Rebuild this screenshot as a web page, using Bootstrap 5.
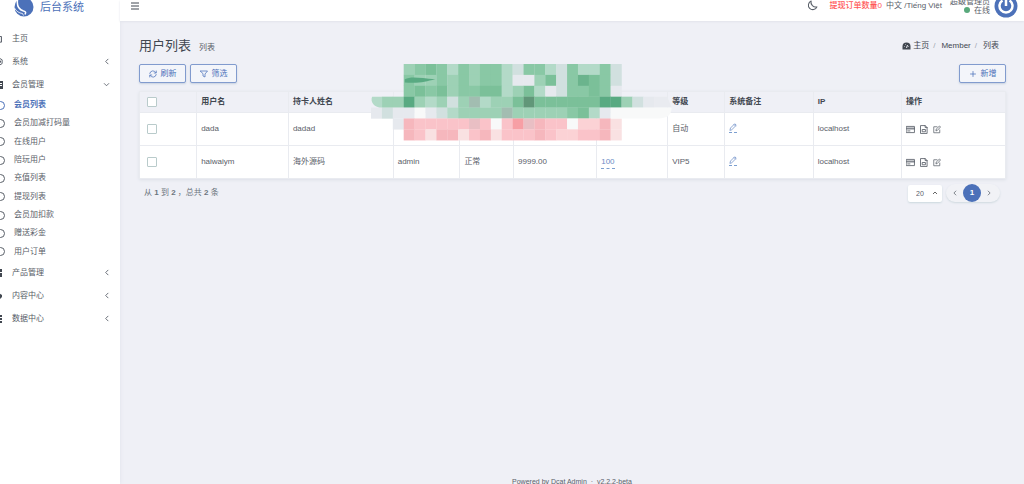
<!DOCTYPE html>
<html lang="zh-CN">
<head>
<meta charset="utf-8">
<meta name="viewport" content="width=device-width, initial-scale=1">
<title>用户列表 - 后台系统</title>
<link href="https://cdn.jsdelivr.net/npm/bootstrap@5.3.0/dist/css/bootstrap.min.css" rel="stylesheet">
<style>
  :root { --brand: #4c71b9; --ink: #5a6069; --page: #eff0f6; --line: #e9ebf0; }
  body { font: 8px/12px "Liberation Sans", "Noto Sans CJK SC", sans-serif; color: var(--ink); background: var(--page); overflow: hidden; }
  a { color: inherit; text-decoration: none; }
  svg { flex: none; display: block; }
  .ico { fill: none; stroke: currentColor; stroke-width: 1.5; stroke-linecap: round; stroke-linejoin: round; }
  .arrow { fill: none; stroke: currentColor; stroke-width: 1; }
  .side { width: 120px; background: #fff; flex: none; box-shadow: 0 0 4px #dfe2ea; }
  .brand-link { height: 13px; margin-bottom: 14px; padding-left: 14px; gap: 6px; font-size: 11px; color: var(--brand); white-space: nowrap; }
  .side-link { height: 23px; gap: 8px; padding-right: 10px; color: #565c66; }
  .side-link > svg:first-child { margin-left: -6px; }
  .side-link .label-text { flex: 1; }
  .sub-menu { display: grid; grid-auto-rows: 1fr; height: 165px; }
  .sub-menu a { gap: 9px; }
  .sub-menu a.active { color: var(--brand); font-weight: 700; }
  .ring { width: 9px; height: 9px; margin-left: -4px; border: 1px solid currentColor; border-radius: 50%; }
  .topbar { height: 21px; padding: 0 6px 10px 10px; background: #fff; box-shadow: 0 1px 2px #e2e4eb; white-space: nowrap; }
  .user-info { line-height: 9px; }
  .dot { width: 6px; height: 6px; border-radius: 50%; background: #59a97c; }
  .alert-text { color: #ff5656; font-weight: 500; margin: 0 4px 0 12px; }
  .main-area { padding: 16px 18px 0 19px; }
  .page-title { font-size: 13px; line-height: 18px; color: #414750; margin: 0; font-weight: 400; }
  .sub-title { font-size: 8px; padding-top: 4px; }
  .crumbs { color: #414750; padding-right: 7px; }
  .crumbs .home { gap: 2px; }
  .crumbs .sep { color: #a0a6b0; margin: 0 6px 0 4px; }
  .tools { margin-top: 9px; }
  .tool-btn { --bs-btn-color: var(--brand); --bs-btn-border-color: #819bce; --bs-btn-hover-color: #fff; --bs-btn-hover-bg: var(--brand); --bs-btn-padding-x: 0; --bs-btn-padding-y: 0; --bs-btn-font-size: 8px; --bs-btn-border-radius: 2px; width: 47px; height: 19px; box-shadow: 0 1px 2px #c6d0df; background: #f3f5fa; }
  .grid-wrap { box-shadow: 0 1px 3px #dcdfe7; }
  .user-table { --bs-table-bg: #fff; table-layout: fixed; color: var(--ink); border-color: var(--line); margin: 0; }
  .user-table th { --bs-table-bg: var(--page); height: 21px; color: #414750; }
  .user-table th, .user-table td { padding: 0 4px; line-height: 12px; vertical-align: middle; white-space: nowrap; }
  .user-table td { height: 33px; }
  .user-table th:first-child, .user-table td:first-child { padding-left: 7px; }
  .user-table .form-check-input { display: block; width: 10px; height: 10px; margin: 0; border: 1px solid #b9cbcb; border-radius: 1px; }
  .editable { display: inline-block; color: #6b8cc6; border-bottom: 1px dashed #7c9fd0; }
  .row-tools { gap: 5px; }
  .mosaic { position: absolute; left: 26.8%; top: -27px; width: 305px; overflow: visible; }
  .grid-foot { margin-top: 5px; padding: 0 6px 0 5px; }
  .page-select { width: 34px; height: 17px; padding: 0 8px; font-size: 7px; line-height: 17px; color: var(--ink); border: 0; border-radius: 2px; background: #fff url("data:image/svg+xml,%3Csvg xmlns='http://www.w3.org/2000/svg' viewBox='0 0 6 4'%3E%3Cpath d='M1 3l2-2 2 2' fill='none' stroke='%23666'/%3E%3C/svg%3E") no-repeat right 4px center / 6px 4px; box-shadow: 0 1px 2px #cbd8dd; }
  .pager { height: 18px; width: 54px; border-radius: 9px; background: #f1f2f6; box-shadow: 0 1px 2px #cfd9df; }
  .pager .page-link { padding: 0; width: 18px; height: 18px; border: 0; border-radius: 50%; background: none; color: var(--ink); font-size: 8px; }
  .pager .active .page-link { background: var(--brand); color: #fff; font-weight: 700; }
  footer { font-size: 7px; line-height: 10px; margin-bottom: -3px; }
</style>
</head>
<body>
<svg class="d-none" aria-hidden="true">
  <symbol id="left" viewBox="0 0 6 8"><path d="M4.500 1L1.500 4l3 3"/></symbol>
  <symbol id="pencil" viewBox="0 0 16 16"><path d="M2 14l1-4 8.500-8.500 3 3L6 13zM10 3l3 3"/></symbol>
  <symbol id="card-i" viewBox="0 0 16 14"><path d="M1 1.500h14v11H1zM1 4.500h14M1 6h14M3 9.500h4"/></symbol>
  <symbol id="doc" viewBox="0 0 14 16"><path d="M1.500 1h7.500l3.500 3.500V15h-11zM9 1v3.500h3.500M4.500 8h5v4h-5z"/></symbol>
  <symbol id="edit" viewBox="0 0 16 16"><path d="M8 2.500H1.500v12h12V9M6 10l.5-3L13 1l2 2-6 6.500z"/></symbol>
</svg>
<div class="d-flex min-vh-100">
  <aside class="side">
    <a href="#" class="brand-link d-flex align-items-center">
      <svg width="20" height="20" viewBox="0 0 20 20"><circle cx="10" cy="10" r="9.500" fill="#4c71b9"/><path d="M3.500 3C2.500 10.500 6 13 9.500 14c2.500.6 2.500 1.500 1.500 3.500" fill="none" stroke="#fff" stroke-width="1.500"/><path d="M.5 11c2 3.500 4.500 5 8 5.500l1 2" fill="none" stroke="#fff" stroke-width=".8"/></svg>
      <span>后台系统</span>
    </a>
    <nav>
      <a href="#" class="side-link d-flex align-items-center"><svg width="10" height="10" viewBox="0 0 16 16" class="ico"><path d="M1 4h11v9H1zM5 4v9M9 4v9"/></svg><span class="label-text">主页</span></a>
      <a href="#" class="side-link d-flex align-items-center"><svg width="10" height="10" viewBox="0 0 16 16" class="ico"><path d="M8 1.500l5 3v6l-5 3-5-3v-6z"/><circle cx="8" cy="7.500" r="2.500"/></svg><span class="label-text">系统</span><svg width="6" height="7" class="arrow"><use href="#left"/></svg></a>
      <a href="#" class="side-link d-flex align-items-center"><svg width="10" height="10" viewBox="0 0 10 10"><path fill="#414750" d="M0 1h9v8H0z"/><path stroke="#fff" d="M5 3.500h3M5 5.500h3"/></svg><span class="label-text">会员管理</span><svg width="7" height="5" viewBox="0 0 8 6" class="arrow"><path d="M1 1.500l3 3 3-3"/></svg></a>
      <div class="sub-menu">
        <a href="#" class="active d-flex align-items-center"><i class="ring"></i>会员列表</a>
        <a href="#" class="d-flex align-items-center"><i class="ring"></i>会员加减打码量</a>
        <a href="#" class="d-flex align-items-center"><i class="ring"></i>在线用户</a>
        <a href="#" class="d-flex align-items-center"><i class="ring"></i>陪玩用户</a>
        <a href="#" class="d-flex align-items-center"><i class="ring"></i>充值列表</a>
        <a href="#" class="d-flex align-items-center"><i class="ring"></i>提现列表</a>
        <a href="#" class="d-flex align-items-center"><i class="ring"></i>会员加扣款</a>
        <a href="#" class="d-flex align-items-center"><i class="ring"></i>赠送彩金</a>
        <a href="#" class="d-flex align-items-center"><i class="ring"></i>用户订单</a>
      </div>
      <a href="#" class="side-link d-flex align-items-center"><svg width="10" height="10" viewBox="0 0 10 10" fill="#414750"><path d="M1 1h3v3H1zM5 1h3v3H5zM1 5h3v4H1zM5 5h3v4H5z"/></svg><span class="label-text">产品管理</span><svg width="6" height="7" class="arrow"><use href="#left"/></svg></a>
      <a href="#" class="side-link d-flex align-items-center"><svg width="10" height="10" viewBox="0 0 10 10" fill="#414750"><path d="M1 4l4-2 3 2v2L5 9 1 7z"/></svg><span class="label-text">内容中心</span><svg width="6" height="7" class="arrow"><use href="#left"/></svg></a>
      <a href="#" class="side-link d-flex align-items-center"><svg width="10" height="10" viewBox="0 0 10 10" fill="#414750"><path d="M0 1h8v2H0zM0 4h8v2H0zM0 7h8v2H0z"/></svg><span class="label-text">数据中心</span><svg width="6" height="7" class="arrow"><use href="#left"/></svg></a>
    </nav>
  </aside>

  <div class="flex-grow-1 d-flex flex-column">
    <header class="topbar d-flex align-items-center">
      <button type="button" class="btn p-0 border-0 me-auto" aria-label="菜单"><svg width="10" height="8" viewBox="0 0 10 8" stroke="#414750"><path d="M1 1h8M1 4h8M1 7h8"/></svg></button>
      <svg class="ico" width="11" height="11" viewBox="0 0 16 16"><path d="M6 1.500a6.500 6.500 0 1 0 8.500 8.500A7 7 0 0 1 6 1.500z"/></svg>
      <a href="#" class="alert-text">提现订单数量0</a>
      <a href="#">中文 /Tiếng Việt</a>
      <div class="user-info d-flex flex-column align-items-end ms-2">
        <span>超级管理员</span>
        <span class="d-flex align-items-center"><i class="dot me-1"></i>在线</span>
      </div>
      <svg class="ms-1" width="24" height="24" viewBox="0 0 24 24"><circle cx="12" cy="12" r="11.500" fill="#4c71b9"/><path d="M8.500 6.500a6.500 6.500 0 1 0 7 0M12 5v7" fill="none" stroke="#fff" stroke-width="2.500"/></svg>
    </header>

    <main class="main-area flex-grow-1">
      <div class="d-flex align-items-center justify-content-between">
        <div class="d-flex align-items-center gap-2">
          <h1 class="page-title">用户列表</h1><span class="sub-title">列表</span>
        </div>
        <nav class="crumbs d-flex align-items-center" aria-label="breadcrumb">
          <a href="#" class="home d-flex align-items-center"><svg width="9" height="8" viewBox="0 0 18 16"><path fill="#414750" d="M1 15V9a8 8 0 0 1 16 0v6z"/><path d="M9 12l2-6M4 9h1M13 9h1M6 5h1" stroke="#eff0f6" stroke-width="2"/></svg>主页</a>
          <span class="sep">/</span><a href="#">Member</a><span class="sep">/</span><span>列表</span>
        </nav>
      </div>
      <div class="tools d-flex gap-1 mb-2">
        <button type="button" class="btn tool-btn d-flex align-items-center justify-content-center gap-1"><svg class="ico" width="8" height="8" viewBox="0 0 16 16"><path d="M1.500 7a6.500 6.500 0 0 1 12-2M14.500 2v4h-4M14.500 9a6.500 6.500 0 0 1-12 2M1.500 14v-4h4"/></svg>刷新</button>
        <button type="button" class="btn tool-btn d-flex align-items-center justify-content-center gap-1"><svg class="ico" width="8" height="8" viewBox="0 0 16 16"><path d="M1 2h14L10 8v6l-4-2V8z"/></svg>筛选</button>
        <button type="button" class="btn tool-btn d-flex align-items-center justify-content-center gap-1 ms-auto"><svg class="ico" width="8" height="8" viewBox="0 0 16 16"><path d="M8 3v10M3 8h10"/></svg>新增</button>
      </div>

      <div class="grid-wrap position-relative">
        <table class="table table-bordered user-table">
          <colgroup><col style="width:6.6%"><col style="width:10.6%"><col style="width:12.1%"><col style="width:7.7%"><col style="width:6.2%"><col style="width:9.6%"><col style="width:8.2%"><col style="width:6.6%"><col style="width:10.2%"><col style="width:10.2%"><col style="width:12%"></colgroup>
          <thead><tr><th><input class="form-check-input" type="checkbox" aria-label="全选"></th><th>用户名</th><th>持卡人姓名</th><th></th><th></th><th></th><th></th><th>等级</th><th>系统备注</th><th>IP</th><th>操作</th></tr></thead>
          <tbody>
            <tr><td><input class="form-check-input" type="checkbox" aria-label="dada"></td><td>dada</td><td>dadad</td><td></td><td></td><td></td><td></td><td>自动</td>
              <td><a href="#" class="editable" aria-label="编辑备注"><svg class="ico" width="8" height="10"><use href="#pencil"/></svg></a></td><td>localhost</td>
              <td><div class="row-tools d-flex"><a href="#" aria-label="账户"><svg class="ico" width="9" height="9"><use href="#card-i"/></svg></a><a href="#" aria-label="详情"><svg class="ico" width="8" height="9"><use href="#doc"/></svg></a><a href="#" aria-label="编辑"><svg class="ico" width="8" height="9"><use href="#edit"/></svg></a></div></td></tr>
            <tr><td><input class="form-check-input" type="checkbox" aria-label="haiwaiym"></td><td>haiwaiym</td><td>海外源码</td><td>admin</td><td>正常</td><td>9999.00</td><td><a href="#" class="editable">100</a></td><td>VIP5</td>
              <td><a href="#" class="editable" aria-label="编辑备注"><svg class="ico" width="8" height="10"><use href="#pencil"/></svg></a></td><td>localhost</td>
              <td><div class="row-tools d-flex"><a href="#" aria-label="账户"><svg class="ico" width="9" height="9"><use href="#card-i"/></svg></a><a href="#" aria-label="详情"><svg class="ico" width="8" height="9"><use href="#doc"/></svg></a><a href="#" aria-label="编辑"><svg class="ico" width="8" height="9"><use href="#edit"/></svg></a></div></td></tr>
          </tbody>
        </table>
        <svg id="mosaic" class="mosaic" viewBox="0 0 280 68" aria-hidden="true"></svg>
      </div>

      <div class="grid-foot d-flex align-items-center gap-1">
        <div class="me-auto text-secondary">从 <b>1</b> 到 <b>2</b> ，总共 <b>2</b> 条</div>
        <select class="page-select form-select" aria-label="每页条数"><option>20</option><option>50</option></select>
        <ul class="pagination pager m-0">
          <li class="page-item"><a class="page-link d-flex align-items-center justify-content-center" href="#" aria-label="上一页"><svg class="arrow" width="6" height="6"><use href="#left"/></svg></a></li>
          <li class="page-item active"><a class="page-link d-flex align-items-center justify-content-center" href="#">1</a></li>
          <li class="page-item"><a class="page-link d-flex align-items-center justify-content-center" href="#" aria-label="下一页"><svg class="arrow" width="6" height="6" viewBox="0 0 6 8"><path d="M1.500 1l3 3-3 3"/></svg></a></li>
        </ul>
      </div>
    </main>
    <footer class="text-center">Powered by <a href="#" class="text-decoration-underline">Dcat Admin</a> &nbsp;·&nbsp; v2.2.2-beta</footer>
  </div>
</div>
<script src="https://cdn.jsdelivr.net/npm/bootstrap@5.3.0/dist/js/bootstrap.bundle.min.js"></script>
<script>
  // Pixelated cover: one letter per block, dots stay transparent
  const shades = { a:'#b3dac8', b:'#9dd1b5', c:'#89c8a5', d:'#7bc099', e:'#6bb48d', f:'#59aa82', g:'#d1e0df', h:'#e6e9ee', w:'#f8f9f9',
    p:'#fac3c9', q:'#f6b7bd', r:'#f79fa5', s:'#fbd2d5', t:'#f9e1e2', k:'#a2bdb1', m:'#e9bfc4', n:'#619779' };
  const rows = [
    '...bcdcacbccagccagcaacg',
    '...cbbcbcbccahhbdgcedcg',
    '...cdcdbccddabdahgccdch',
    '.bbfbabgbkabbdnddddddffbgh',
    'hghhwhgabbbbkbbbbbcdah',
    '..hqpppppmpwprmqppwssqt',
    '...qptqqtpqtpppqpssppqt'
  ];
  const blocks = rows.map((row, y) =>
    [...row].map((c, x) => shades[c] ? `<rect x="${x * 10}" y="${y * 10}" width="10.2" height="10.2" fill="${shades[c]}"/>` : '').join('')
  ).join('');
  const ends = `<path d="M260 30h12l4 10h-16z" fill="#e9ebf0"/><path d="M220 40h56c0 6-3 10-12 10h-44z" fill="#f8f9f9"/>
    <path d="M10.200 30H1c-2 5 2 10 9.200 10z" fill="${shades.a}"/><path d="M31 14c6-3 14-1 28 0-9 2-14 4-28 3z" fill="${shades.f}"/>`;
  document.getElementById('mosaic').innerHTML = blocks + ends;
</script>
</body>
</html>
